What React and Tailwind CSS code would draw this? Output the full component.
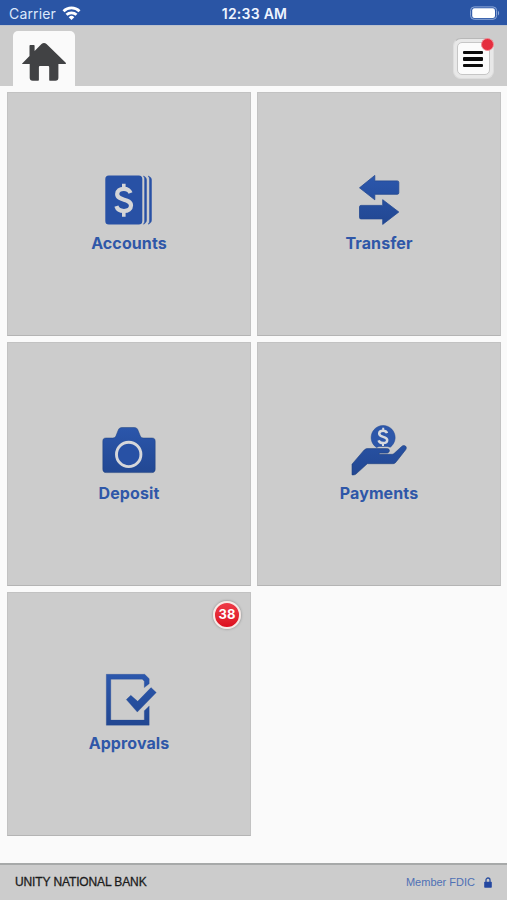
import React from 'react'

const BlueFill = ({ id }) => (
  <defs>
    <linearGradient id={id} x1="0" y1="0" x2="0" y2="56" gradientUnits="userSpaceOnUse">
      <stop offset="0" stopColor="#2c58ae" />
      <stop offset="1" stopColor="#214690" />
    </linearGradient>
  </defs>
)

const AccountsIcon = () => (
  <svg className="w-[60px] h-14" viewBox="0 0 60 56" fill="#2851a5">
    <rect x="6.3" y="3.6" width="37" height="49" rx="3.5" />
    <path d="M44.3 4c2.2.7 3.2 2 3.2 4v40c0 2-1 3.5-3.2 4.2 1-.9 1.3-2 1.3-4V8c0-2-.3-3.1-1.3-4z" stroke="#2851a5" strokeWidth=".5" />
    <path d="M49 4c2.4.7 3.5 2 3.5 4v40c0 2-1.1 3.5-3.5 4.2 1.2-.9 1.5-2 1.5-4V8c0-2-.3-3.1-1.5-4z" stroke="#2851a5" strokeWidth=".5" />
    <g fill="none" stroke="#d5d6d7">
      <path d="M31.5 21c-1-2.8-3.3-4.2-6.6-4.2-4 0-6.7 2-6.7 5.2 0 7.5 13.8 3.8 13.8 11.6 0 3.4-2.9 5.4-7 5.4-4 0-6.7-1.7-7.6-4.8" strokeWidth="4.2" />
      <path d="M24.8 11.7v5.5M24.8 38.5v6.3" strokeWidth="3.6" />
    </g>
  </svg>
)

const TransferIcon = () => (
  <svg className="w-[60px] h-14" viewBox="0 0 60 56">
    <BlueFill id="transferFill" />
    <g fill="url(#transferFill)" stroke="#234992" strokeWidth=".8" strokeLinejoin="round">
      <path d="M10.5 15.8 25.8 3.4v5.5h22.5a1.5 1.5 0 0 1 1.5 1.5v10.4a1.5 1.5 0 0 1-1.5 1.5H25.8v5.5z" />
      <path d="M49.8 40 33.7 27.7v5.7H12a1.5 1.5 0 0 0-1.5 1.5v10.5a1.5 1.5 0 0 0 1.5 1.5h21.7v5.5z" />
    </g>
  </svg>
)

const DepositIcon = () => (
  <svg className="w-[60px] h-14" viewBox="0 0 60 56">
    <BlueFill id="depositFill" />
    <path
      d="M7 16h6.5c2 0 2.9-.8 3.600-2.500l2.100-5.300c.7-1.900 1.800-2.700 3.800-2.700h12.200c2 0 3.100.8 3.800 2.700l2.100 5.300c.7 1.700 1.600 2.500 3.600 2.500H53c2.200 0 3.200 1.200 3.200 3.200v28c0 2.200-1.200 3.400-3.400 3.400H7.200c-2.200 0-3.400-1.200-3.400-3.400v-28C3.800 17.200 4.800 16 7 16z"
      fill="url(#depositFill)"
      stroke="#20427f"
      strokeWidth=".5"
    />
    <circle cx="29.7" cy="32.4" r="12.2" fill="#2851a5" stroke="#d6d7da" strokeWidth="2.9" />
  </svg>
)

const PaymentsIcon = () => (
  <svg className="w-[60px] h-14" viewBox="0 0 60 56">
    <BlueFill id="paymentsFill" />
    <path
      d="M27.5 25.5a12 12 0 1 1 13.7-.3l-2.7-.8H30z"
      fill="#2d57aa"
      stroke="#234992"
      strokeWidth=".5"
    />
    <g fill="none" stroke="#d8dade">
      <path d="M38 11.2c-.6-1.7-1.9-2.4-3.9-2.4-2.3 0-3.9 1-3.9 2.8 0 4.4 8 2.1 8 6.4 0 2-1.7 3.1-4.1 3.1-2.4 0-4-.9-4.5-2.7" strokeWidth="2.5" />
      <path d="M34.2 5.8v3M34 21.3v2.8" strokeWidth="2" />
    </g>
    <path
      d="M3 42.2 14.3 29c1.6-1.8 2.7-2.4 4.7-2.4h18.8c2 0 3 1.2 2.5 2.7-.4 1.2-1.3 1.8-2.5 1.8h-7.5v1.2h12.2c1.4 0 2.2-.3 3-1.2l7.2-6.700c1.200-1.100 2.800-1.200 3.800-.3 1.100 1 1 2.400.2 3.600L47.300 39.700c-1 1.400-2 2-3.600 2H18.300L7 52c-1.200 1-2.400.9-4 .9z"
      fill="url(#paymentsFill)"
      stroke="#20427f"
      strokeWidth=".6"
      strokeLinejoin="round"
    />
  </svg>
)

const ApprovalsIcon = () => (
  <svg className="w-[60px] h-14" viewBox="0 0 60 56">
    <BlueFill id="approvalsFill" />
    <g fill="url(#approvalsFill)" stroke="#22468f" strokeWidth=".3">
      <path d="M7.3 2.3h38.4l4.5 4.4v5l-4.9 3.9V9.2l-2-2H11.8v40.9h33.5v-9.3l4.9-4.9v19.3H7.3z" />
      <path d="m27.3 27.6 4.5-4.3 6.9 6L52 15.6l5.3 5-19 19.5z" />
    </g>
  </svg>
)

const tiles = [
  { label: 'Accounts', Icon: AccountsIcon },
  { label: 'Transfer', Icon: TransferIcon },
  { label: 'Deposit', Icon: DepositIcon },
  { label: 'Payments', Icon: PaymentsIcon },
  { label: 'Approvals', Icon: ApprovalsIcon, badge: 38 },
]

const Tile = ({ label, Icon, badge }) => (
  <button className="relative flex flex-col items-center h-[244px] pt-[79px] bg-[#cccccc] border border-[#c2c2c2] border-b-[#b4b4b4]">
    <Icon />
    <span className="mt-1 text-base leading-[22px] tracking-[0.1px] font-bold text-[#2f57a8]">{label}</span>
    {badge && (
      <span className="absolute top-[8px] right-[9px] w-7 h-7 flex items-center justify-center rounded-full border-2 border-[#f6e9e6] bg-linear-to-b from-[#ee3a48] to-[#dc0a1c] text-white text-[13px] font-bold shadow-[0_0_2px_1px_#aaaaaa]">
        {badge}
      </span>
    )}
  </button>
)

const StatusBar = () => (
  <div className="h-[25px] shrink-0 grid grid-cols-3 items-center pl-[9px] pr-[7px] bg-[#2a55a5] text-white">
    <div className="flex items-center gap-[6px] pt-[3px] text-[14px] leading-5 tracking-[0.15px] text-[#dce8fb]">
      Carrier
      <svg className="w-[19px] h-3.5 -mt-0.5" viewBox="0 0 18 14" fill="none" stroke="#ffffff" strokeWidth="2.8">
        <path d="M1 5.2a11.4 11.4 0 0 1 16 0M4 8.8a7.2 7.2 0 0 1 10 0" />
        <path d="M9 14 6.2 11.2a4 4 0 0 1 5.6 0z" fill="#ffffff" stroke="none" />
      </svg>
    </div>
    <p className="pt-[3px] text-center text-[14px] leading-5 tracking-[0.25px] font-semibold text-[#eef4ff] whitespace-nowrap">12:33 AM</p>
    <svg className="w-[30px] h-3.5 justify-self-end" viewBox="0 0 30 14">
      <rect x=".6" y=".9" width="26" height="12.4" rx="3.6" fill="none" stroke="#8fa9d8" />
      <rect x="2.2" y="2.3" width="22.8" height="9.6" rx="2.2" fill="#ffffff" />
      <path d="M28 4.8c1.5.7 1.5 3.9 0 4.6z" fill="#8fa9d8" />
    </svg>
  </div>
)

const Header = () => (
  <header className="h-[61px] shrink-0 flex justify-between px-[13px] bg-[#cccccc] border-t border-[#bcc2cd]">
    <div className="w-[62px] mt-[5px] h-[55px] rounded-t-[5px] bg-[#fafafa] flex justify-center">
      <svg className="w-[46px] h-10 mt-[11px]" viewBox="0 0 46 40">
        <path
          d="M1.2 21.5 8.5 14V3.8c0-.5.3-.8.8-.8h3.5c.5 0 .8.3.8.8V9L20.5 2c1.6-1.5 3.4-1.5 5 0l19 18.6c.8.8.6 1.5-.5 1.5h-6.6v13.6c0 2-1 3-3 3h-5.2c-.7 0-1-.4-1-1V25.5c0-.9-.5-1.4-1.4-1.4h-7.5c-.9 0-1.4.5-1.4 1.4v12.2c0 .6-.4 1-1 1h-5.2c-2 0-3-1-3-3V22.1H1.8c-.6 0-.9-.3-.6-.6z"
          fill="#414244"
        />
      </svg>
    </div>
    <button className="relative w-[41px] h-[41px] mt-3 p-[3px] rounded-lg bg-[#e8e8e8] border border-[#dddddd] border-t-[#b8b8b8]">
      <span className="flex flex-col items-center justify-center gap-[3px] h-full pt-px pr-px rounded-[5px] bg-[#fbfbfb] border border-[#c6c6c6]">
        <span className="w-5 h-[3.3px] rounded-[1px] bg-[#0b0b0b]" />
        <span className="w-5 h-[3.3px] rounded-[1px] bg-[#0b0b0b]" />
        <span className="w-5 h-[3.3px] rounded-[1px] bg-[#0b0b0b]" />
      </span>
      <span className="absolute -top-px -right-px w-[13px] h-[13px] rounded-full border border-[#ee8b94] bg-[#e52d3e]" />
    </button>
  </header>
)

const Footer = () => (
  <footer className="h-[37px] shrink-0 flex items-center justify-between px-[15px] bg-[#cccccc] border-t-2 border-[#a7a9a9]">
    <p className="font-['Liberation_Sans',sans-serif] text-[12px] tracking-[-0.12px] text-[#1c1c1c] [-webkit-text-stroke:0.3px_#1c1c1c] -mt-0.5">UNITY NATIONAL BANK</p>
    <p className="flex items-center gap-[9px] font-['Liberation_Sans',sans-serif] text-[11px] text-[#4f70b5]">
      Member FDIC
      <svg className="w-2 h-[11px]" viewBox="0 0 8 11">
        <path d="M2 5V3a2 2 0 0 1 4 0v2" fill="none" stroke="#2b4f9f" strokeWidth="1.3" />
        <rect x=".2" y="4.7" width="7.6" height="6" rx=".7" fill="#2447a0" />
      </svg>
    </p>
  </footer>
)

export default function App() {
  return (
    <div className="w-full max-w-[507px] h-[900px] flex flex-col overflow-hidden bg-[#fafafa] font-['Inter',sans-serif]">
      <StatusBar />
      <Header />
      <main className="flex-1 pt-1.5 pl-[7px] pr-1.5">
        <div className="grid grid-cols-2 gap-1.5">
          {tiles.map((tile) => (
            <Tile key={tile.label} {...tile} />
          ))}
        </div>
      </main>
      <Footer />
    </div>
  )
}
